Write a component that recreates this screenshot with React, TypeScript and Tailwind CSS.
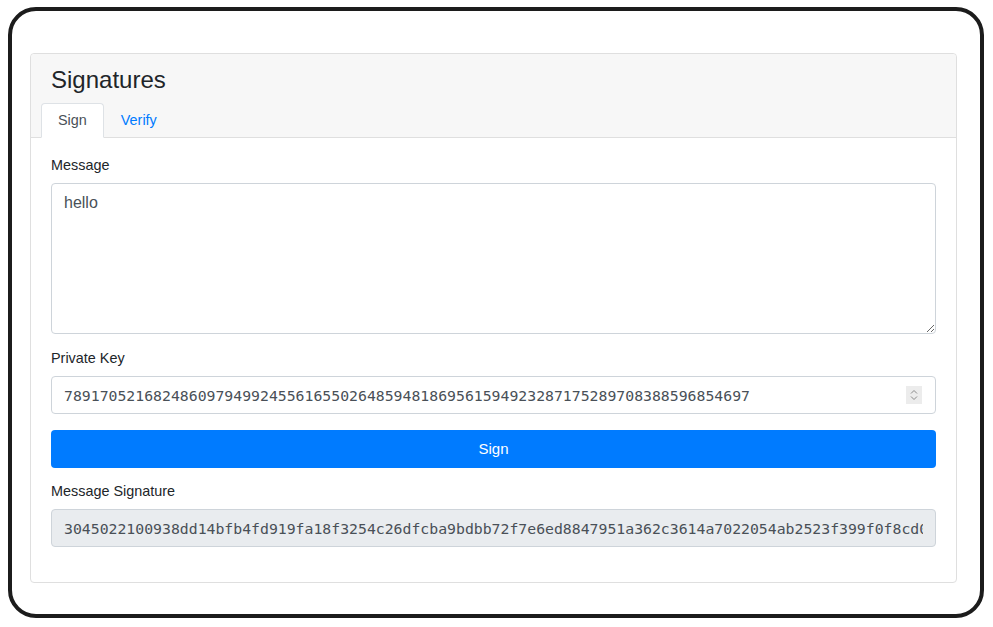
import React from "react";

const sans = { fontFamily: '"Liberation Sans", Arial, sans-serif' };
const mono = { fontFamily: '"DejaVu Sans Mono", "Liberation Mono", monospace' };

export default function App() {
  return (
    <div className="w-[993px] h-[627px] bg-white pt-[7px] pl-[8px]" style={sans}>
      <div className="w-[976px] h-[611px] border-[4px] border-[#1c1c1c] rounded-[28px] pt-[42px] pl-[18px]">
        <div className="w-[927px] border border-[#dfdfdf] rounded-[4px] bg-white">
          <div className="bg-[#f7f7f7] border-b border-[#dfdfdf] pt-[11px] px-[20px] rounded-t-[4px]">
            <h3 className="text-[24px] leading-[29px] text-[#212529] mb-[9px]">Signatures</h3>
            <div className="flex -mx-[10px] -mb-px">
              <div className="px-[16px] h-[35px] flex items-center text-[14.4px] text-[#495057] bg-white border border-[#dee2e6] border-b-white rounded-t-[4px]">
                Sign
              </div>
              <div className="px-[16px] h-[35px] flex items-center text-[14.4px] text-[#007bff] border border-transparent">
                Verify
              </div>
            </div>
          </div>
          <div className="px-[20px] pt-[19px] pb-[19px]">
            <div className="text-[14.4px] leading-[16px] text-[#212529] mb-[10px]">Message</div>
            <textarea
              className="block w-full h-[151px] border border-[#ced4da] rounded-[4px] px-[12px] pt-[7px] text-[16px] leading-[24px] text-[#495057] outline-none mb-[16px]"
              style={sans}
              defaultValue="hello"
            />
            <div className="text-[14.4px] leading-[16px] text-[#212529] mb-[10px]">Private Key</div>
            <div className="relative mb-[16px]">
              <input
                className="block w-full h-[38px] border border-[#ced4da] rounded-[4px] px-[12px] text-[14.8px] text-[#495057] outline-none"
                style={mono}
                readOnly
                value="78917052168248609794992455616550264859481869561594923287175289708388596854697"
              />
              <div className="absolute right-[14px] top-[10px] w-[16px] h-[18px] bg-[#ececec] flex items-center justify-center">
                <svg width="8" height="12" viewBox="0 0 8 12" fill="none" stroke="#8a8a8a" strokeWidth="1">
                  <path d="M1 4.5 L4 1.5 L7 4.5" />
                  <path d="M1 7.5 L4 10.5 L7 7.5" />
                </svg>
              </div>
            </div>
            <button className="block w-full h-[38px] bg-[#007bff] rounded-[4px] text-white text-[15px] mb-[15px]" style={sans}>
              Sign
            </button>
            <div className="text-[14.4px] leading-[16px] text-[#212529] mb-[10px]">Message Signature</div>
            <input
              className="block w-full h-[38px] border border-[#ced4da] rounded-[4px] px-[12px] text-[14.8px] text-[#495057] bg-[#e9ecef] outline-none mb-[16px]"
              style={mono}
              readOnly
              value="3045022100938dd14bfb4fd919fa18f3254c26dfcba9bdbb72f7e6ed8847951a362c3614a7022054ab2523f399f0f8cd0a1b2c3d4e5f60718293a4b5c6d7e8f9"
            />
          </div>
        </div>
      </div>
    </div>
  );
}
